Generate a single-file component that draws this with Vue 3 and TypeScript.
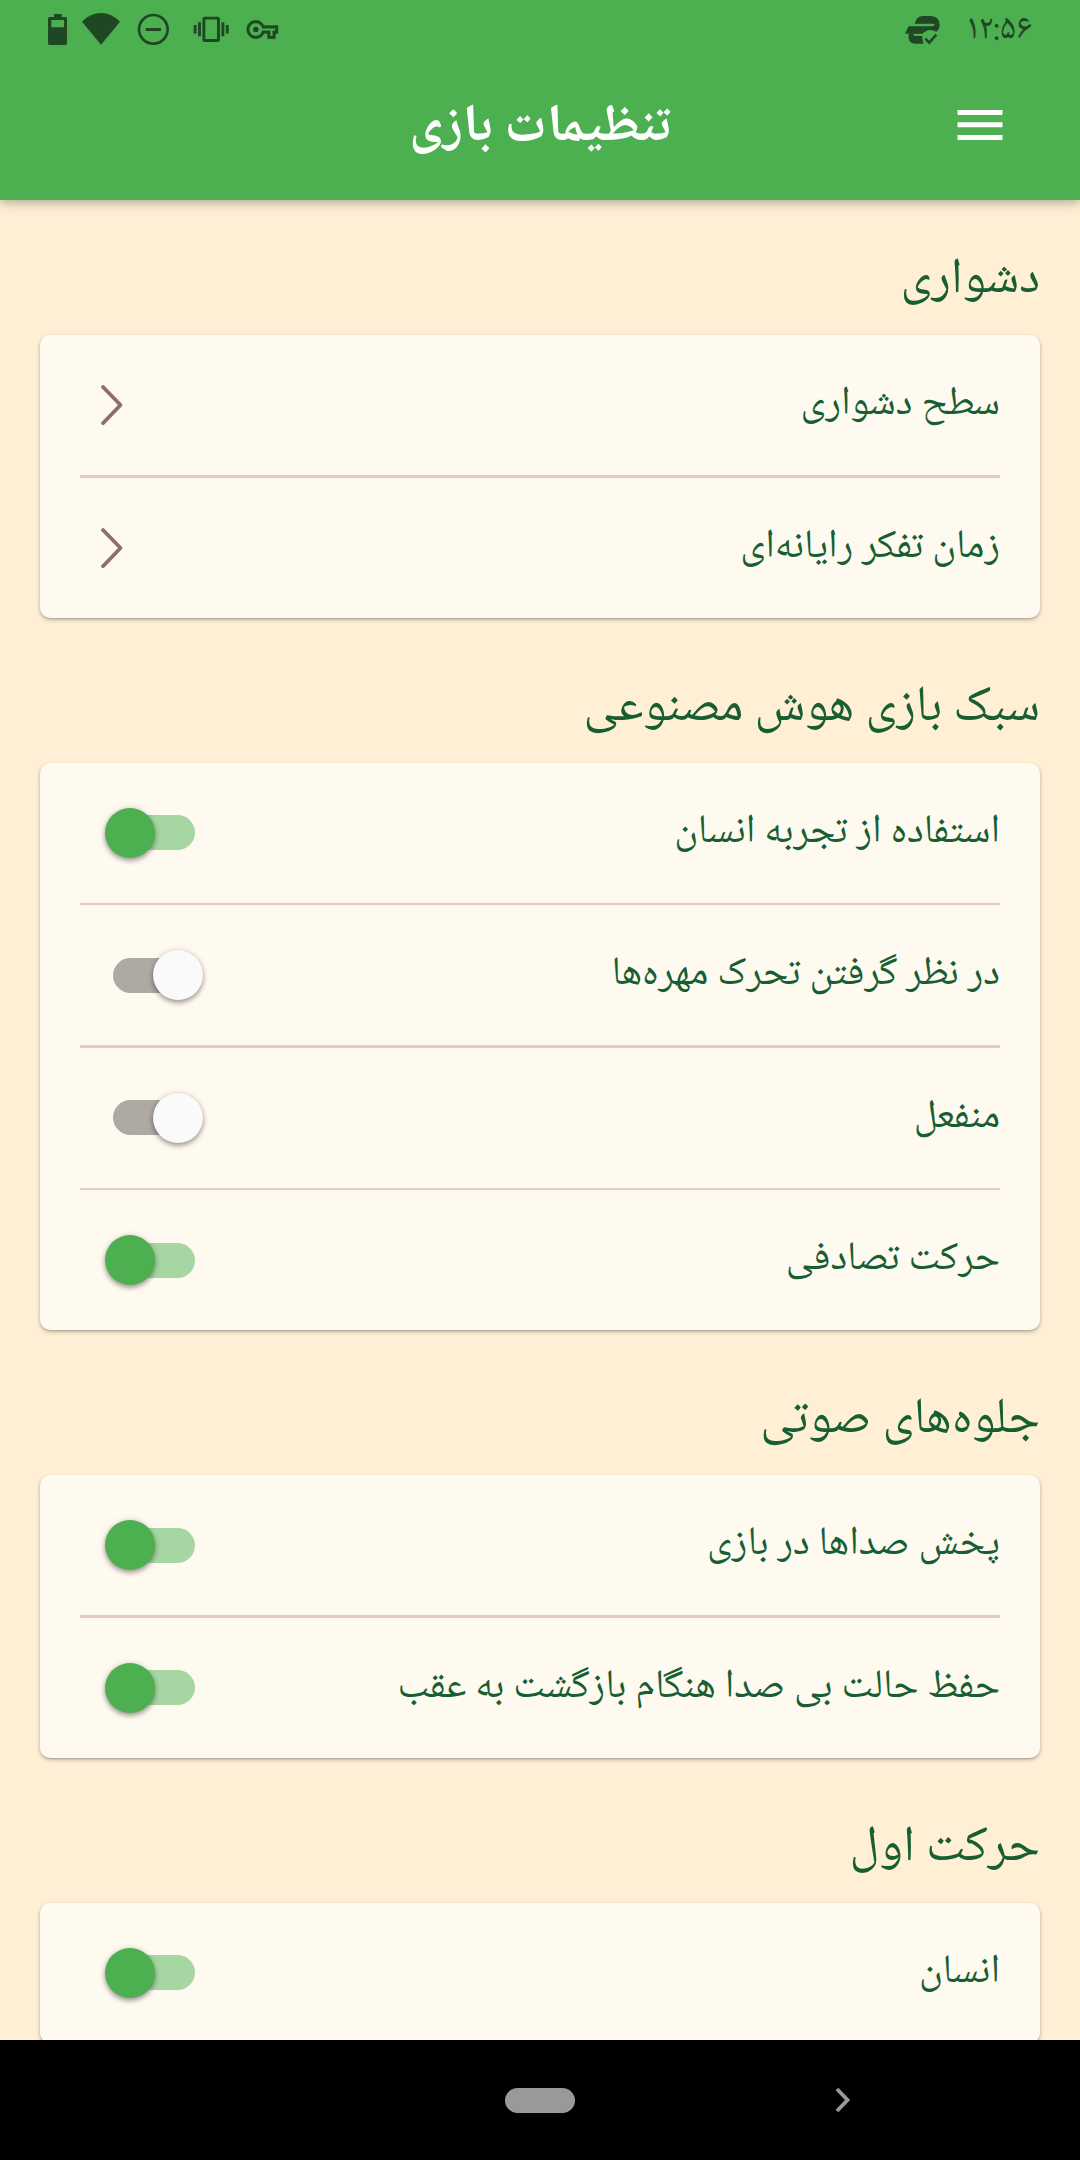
<script setup lang="ts">
interface Row {
  label: string
  kind: 'link' | 'switch'
  on?: boolean
}
interface Section {
  title: string
  rows: Row[]
}

const sections: Section[] = [
  {
    title: 'دشواری',
    rows: [
      { label: 'سطح دشواری', kind: 'link' },
      { label: 'زمان تفکر رایانه‌ای', kind: 'link' },
    ],
  },
  {
    title: 'سبک بازی هوش مصنوعی',
    rows: [
      { label: 'استفاده از تجربه انسان', kind: 'switch', on: true },
      { label: 'در نظر گرفتن تحرک مهره‌ها', kind: 'switch', on: false },
      { label: 'منفعل', kind: 'switch', on: false },
      { label: 'حرکت تصادفی', kind: 'switch', on: true },
    ],
  },
  {
    title: 'جلوه‌های صوتی',
    rows: [
      { label: 'پخش صداها در بازی', kind: 'switch', on: true },
      { label: 'حفظ حالت بی صدا هنگام بازگشت به عقب', kind: 'switch', on: true },
    ],
  },
  {
    title: 'حرکت اول',
    rows: [{ label: 'انسان', kind: 'switch', on: true }],
  },
]
</script>

<template>
  <div class="screen" dir="rtl" lang="fa">
    <header class="top">
      <div class="status">
        <div class="status-start">
          <span class="clock">۱۲:۵۶</span>
          <svg class="app-icon" viewBox="70 0 116 180" width="38.67" height="60">
            <path d="M105 71Q110 49 130 48H153Q180 50 180 75Q180 88 170 95Q149 84 134 97L128 101H76L87 79H158Q165 78 165 74.500Q165 71 158 71Z" />
            <path d="M87 101H101Q101 108 109 108H128Q127 121 132 131H106Q83 130 87 101Z" />
            <path class="line" d="M137 116L149 128L170 104" stroke-width="8" />
          </svg>
        </div>
        <svg class="sys-icons" viewBox="0 0 810 180" width="270" height="60">
          <path fill-rule="evenodd" d="M72 42H95V51H106Q111 51 111 56V130Q111 135 106 135H59Q54 135 54 130V56Q54 51 59 51H72ZM64 60V82H102V60Z" />
          <path d="M156 65Q181 39 213 39Q245 39 270 65L213 134Z" />
          <circle class="line" cx="370" cy="88" r="43" stroke-width="8" />
          <path d="M347 84H393V93H347Z" />
          <path transform="translate(491 37.500) scale(4.380 4.200)" d="M0 15h2V9H0v6zm3 2h2V7H3v10zm19-8v6h2V9h-2zm-3 8h2V7h-2v10zM16.500 3h-9C6.670 3 6 3.670 6 4.500v15c0 .830.670 1.500 1.500 1.500h9c.830 0 1.500-.670 1.500-1.500v-15c0-.830-.670-1.500-1.500-1.500zM16 19H8V5h8v14z" />
          <g transform="translate(650 41.500) scale(3.920)">
            <path stroke="#1f4723" stroke-width=".3" d="M22 19h-6v-4h-2.680c-1.140 2.420-3.600 4-6.320 4-3.860 0-7-3.140-7-7s3.140-7 7-7c2.720 0 5.170 1.580 6.320 4H24v6h-2v4zm-4-2h2v-4h2v-2H11.940l-.230-.670C11.010 8.340 9.110 7 7 7c-2.760 0-5 2.240-5 5s2.240 5 5 5c2.110 0 4.010-1.340 4.710-3.330l.230-.670H18v4z" />
            <circle cx="7" cy="12" r="2.100" />
          </g>
        </svg>
      </div>
      <div class="bar">
        <svg class="menu" viewBox="0 0 46 30" width="46" height="30">
          <path d="M0.500 0h45v5h-45zM0.500 12.300h45v5h-45zM0.500 25h45v5h-45z" />
        </svg>
        <h1 class="title">تنظیمات بازی</h1>
      </div>
    </header>

    <main class="content">
      <section v-for="section in sections" :key="section.title" class="section">
        <h2 class="heading">{{ section.title }}</h2>
        <div class="card">
          <template v-for="(row, i) in section.rows" :key="row.label">
            <div v-if="i > 0" class="divider"></div>
            <div class="row">
              <div class="label">{{ row.label }}</div>
              <svg v-if="row.kind === 'link'" class="chevron" viewBox="0 0 24 42" width="24" height="42">
                <path d="M3 3L20.500 21L3 39.200" />
              </svg>
              <div v-else class="switch" :class="{ on: row.on }"><i class="thumb"></i></div>
            </div>
          </template>
        </div>
      </section>
    </main>

    <footer class="nav">
      <div class="slot">
        <svg viewBox="0 0 16 26" width="16" height="26"><path d="M2 2L12.500 13L2 24" /></svg>
      </div>
      <div class="slot"><i class="pill"></i></div>
      <div class="slot"></div>
    </footer>
  </div>
</template>

<style>
body {
  margin: 0;
  background: #000;
}
</style>

<style scoped>
.screen {
  display: flex;
  flex-direction: column;
  width: 1080px;
  height: 2160px;
  overflow: hidden;
  background: #ffefd5;
  color: #175e33;
  font-family: "Noto Naskh Arabic UI", "Noto Naskh Arabic", "DejaVu Sans", sans-serif;
}
.top {
  flex: none;
  z-index: 1;
  height: 200px;
  background: #4caf50;
  box-shadow: 0 2px 8px rgba(0, 0, 0, 0.18), 0 5px 12px rgba(0, 0, 0, 0.12);
}
.status {
  display: flex;
  justify-content: space-between;
  height: 60px;
  padding: 0 48px 0 30px;
  fill: #1f4723;
  color: #1f4723;
}
.line {
  fill: none;
  stroke: #1f4723;
}
.status-start {
  display: flex;
  gap: 25px;
}
.clock {
  font-size: 35.500px;
  line-height: 59px;
  white-space: nowrap;
}
.bar {
  display: grid;
  grid-template-columns: 1fr 300px 1fr;
  align-items: center;
  height: 130px;
  padding: 0 77px;
}
.menu {
  fill: #fff;
}
.title {
  align-self: start;
  height: 130px;
  margin: 0;
  color: #fff;
  font-size: 53px;
  font-weight: 700;
  line-height: 135px;
  text-align: center;
  white-space: nowrap;
}
.content {
  flex: 1;
  min-height: 0;
  overflow: hidden;
}
.section {
  padding: 0 40px 10px;
}
.heading {
  height: 135px;
  margin: 0;
  font-size: 50.200px;
  font-weight: 400;
  line-height: 160px;
  white-space: nowrap;
}
.card {
  padding: 0 40px;
  border-radius: 10px;
  background: #fffaf0;
  box-shadow: 0 2px 4px rgba(0, 0, 0, 0.22), 0 1px 2px rgba(0, 0, 0, 0.16);
}
.row {
  display: flex;
  align-items: center;
  justify-content: space-between;
  height: 140px;
}
.divider {
  height: 2.500px;
  background: #e4c9c5;
}
.label {
  height: 140px;
  font-size: 40.250px;
  line-height: 137px;
  white-space: nowrap;
}
.chevron {
  margin-left: 20px;
}
.chevron path {
  fill: none;
  stroke: #8d6e70;
  stroke-width: 3.800;
  stroke-linecap: round;
  stroke-linejoin: round;
}
.switch {
  display: flex;
  align-items: center;
  justify-content: flex-start;
  width: 82.500px;
  height: 35px;
  margin-left: 32.500px;
  border-radius: 18px;
  background: #aeaaa3;
}
.switch.on {
  justify-content: flex-end;
  background: #a6d7a2;
}
.thumb {
  flex: none;
  width: 50px;
  height: 50px;
  margin: 0 -7.500px;
  border-radius: 50%;
  background: #fafafa;
  box-shadow: 0 3px 5px rgba(0, 0, 0, 0.32), 0 0 6px rgba(0, 0, 0, 0.14);
}
.on .thumb {
  background: #4caf50;
}
.nav {
  flex: none;
  display: grid;
  grid-template-columns: 1fr 70px 1fr;
  height: 120px;
  background: #000;
}
.slot {
  display: flex;
  align-items: center;
}
.slot svg {
  margin-right: 229px;
  fill: none;
  stroke: #999;
  stroke-width: 3.800;
}
.pill {
  width: 70px;
  height: 25px;
  border-radius: 13px;
  background: #999;
}
</style>
